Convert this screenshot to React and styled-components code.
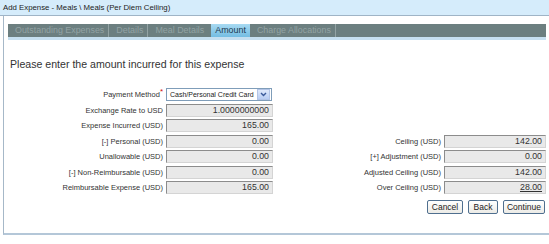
import React from "react";
import styled, { createGlobalStyle } from "styled-components";

const Global = createGlobalStyle`
  body {
    margin: 0;
    background: #ffffff;
    font-family: "Liberation Sans", Arial, sans-serif;
    color: #333;
  }
`;

const Window = styled.div`
  width: 549px;
  height: 244px;
  display: flex;
  flex-direction: column;
`;

const TitleBar = styled.div`
  height: 15px;
  background: #d5ecfb;
  border-bottom: 1px solid #9fb4c6;
  padding-left: 3px;
  font-size: 7.8px;
  line-height: 15px;
  color: #222;
`;

const Panel = styled.div`
  margin-left: 3px;
  height: 217px;
  border-left: 1px solid #a6b8c8;
  border-bottom: 2px solid #b4c7d8;
  display: flex;
  flex-direction: column;
`;

const TabBar = styled.div`
  margin: 8px 3px 0 4px;
  height: 13px;
  background: #6c7f80;
  border-bottom: 3px solid #c6e0f1;
  display: flex;
  align-items: center;
  padding-left: 3px;
`;

const Tab = styled.div`
  height: 13px;
  line-height: 13px;
  padding: 0 4px;
  font-size: 8.9px;
  color: ${(p) => (p.$active ? "#1d3a50" : "#93a3a4")};
  background: ${(p) =>
    p.$active ? "linear-gradient(#a8daf2, #74bde2)" : "transparent"};
  border-right: ${(p) => (p.$sep ? "1px solid #93a3a4" : "none")};
  margin-right: 3px;
`;

const Intro = styled.div`
  margin: 19px 0 0 6px;
  font-size: 10.6px;
  line-height: 11px;
  color: #333;
`;

const FormArea = styled.div`
  display: flex;
  margin-top: 18px;
`;

const Column = styled.div`
  display: grid;
  grid-template-columns: ${(p) => p.$cols};
  grid-auto-rows: 13px;
  row-gap: 2.5px;
  column-gap: 3px;
  margin-top: ${(p) => p.$top || 0}px;
  margin-left: ${(p) => p.$left || 0}px;
  align-content: start;
`;

const Label = styled.div`
  font-size: 7.5px;
  line-height: 13px;
  text-align: right;
  white-space: nowrap;
  color: #333;
`;

const Req = styled.span`
  color: #d01010;
  font-size: 8px;
  vertical-align: top;
  line-height: 8px;
`;

const Field = styled.div`
  box-sizing: border-box;
  height: 13px;
  background: #e9e9e9;
  border-top: 1px solid #8c8c8c;
  border-left: 1px solid #8c8c8c;
  border-right: 1px solid #d4d4d4;
  border-bottom: 1px solid #d4d4d4;
  font-size: 8.8px;
  line-height: 11px;
  text-align: right;
  padding-right: 3px;
  color: #333;
`;

const Link = styled.span`
  text-decoration: underline;
`;

const Select = styled.div`
  box-sizing: border-box;
  height: 13px;
  width: 106px;
  border: 1px solid #7f9db9;
  background: #fff;
  display: flex;
  align-items: center;
  font-size: 7px;
  padding-left: 3px;
  color: #222;
`;

const SelectText = styled.span`
  flex: 1;
  white-space: nowrap;
`;

const Arrow = styled.div`
  width: 11px;
  height: 9px;
  margin-right: 1px;
  background: linear-gradient(#dfe9fb, #b8cdf3);
  border: 1px solid #b2c4e6;
  display: flex;
  align-items: center;
  justify-content: center;
`;

const ButtonRow = styled.div`
  display: flex;
  justify-content: flex-end;
  gap: 5px;
  margin: 6px 4px 0 0;
`;

const Button = styled.button`
  box-sizing: border-box;
  height: 14px;
  padding: 0;
  width: ${(p) => p.$w}px;
  border: 1px solid #4f6f8f;
  border-radius: 2px;
  background: linear-gradient(#ffffff, #ecebe6);
  font-family: "Liberation Sans", Arial, sans-serif;
  font-size: 8.5px;
  line-height: 12px;
  color: #222;
`;

const left = [
  ["Exchange Rate to USD", "1.0000000000"],
  ["Expense Incurred (USD)", "165.00"],
  ["[-] Personal (USD)", "0.00"],
  ["Unallowable (USD)", "0.00"],
  ["[-] Non-Reimbursable (USD)", "0.00"],
  ["Reimbursable Expense (USD)", "165.00"],
];

const right = [
  ["Ceiling (USD)", "142.00"],
  ["[+] Adjustment (USD)", "0.00"],
  ["Adjusted Ceiling (USD)", "142.00"],
  ["Over Ceiling (USD)", "28.00", true],
];

export default function App() {
  return (
    <Window>
      <Global />
      <TitleBar>Add Expense - Meals \ Meals (Per Diem Ceiling)</TitleBar>
      <Panel>
        <TabBar>
          <Tab $sep>Outstanding Expenses</Tab>
          <Tab $sep>Details</Tab>
          <Tab>Meal Details</Tab>
          <Tab $active>Amount</Tab>
          <Tab $sep>Charge Allocations</Tab>
        </TabBar>
        <Intro>Please enter the amount incurred for this expense</Intro>
        <FormArea>
          <Column $cols="159px 107px">
            <Label>
              Payment Method<Req>*</Req>
            </Label>
            <Select>
              <SelectText>Cash/Personal Credit Card</SelectText>
              <Arrow>
                <svg width="7" height="5" viewBox="0 0 7 5">
                  <path d="M1 1 L3.5 3.5 L6 1" stroke="#3a5a9a" strokeWidth="1.4" fill="none" />
                </svg>
              </Arrow>
            </Select>
            {left.map(([l, v]) => (
              <React.Fragment key={l}>
                <Label>{l}</Label>
                <Field>{v}</Field>
              </React.Fragment>
            ))}
          </Column>
          <Column $cols="110px 102px" $top={46.5} $left={58}>
            {right.map(([l, v, link]) => (
              <React.Fragment key={l}>
                <Label>{l}</Label>
                <Field>{link ? <Link>{v}</Link> : v}</Field>
              </React.Fragment>
            ))}
          </Column>
        </FormArea>
        <ButtonRow>
          <Button $w={36}>Cancel</Button>
          <Button $w={30}>Back</Button>
          <Button $w={42}>Continue</Button>
        </ButtonRow>
      </Panel>
    </Window>
  );
}
